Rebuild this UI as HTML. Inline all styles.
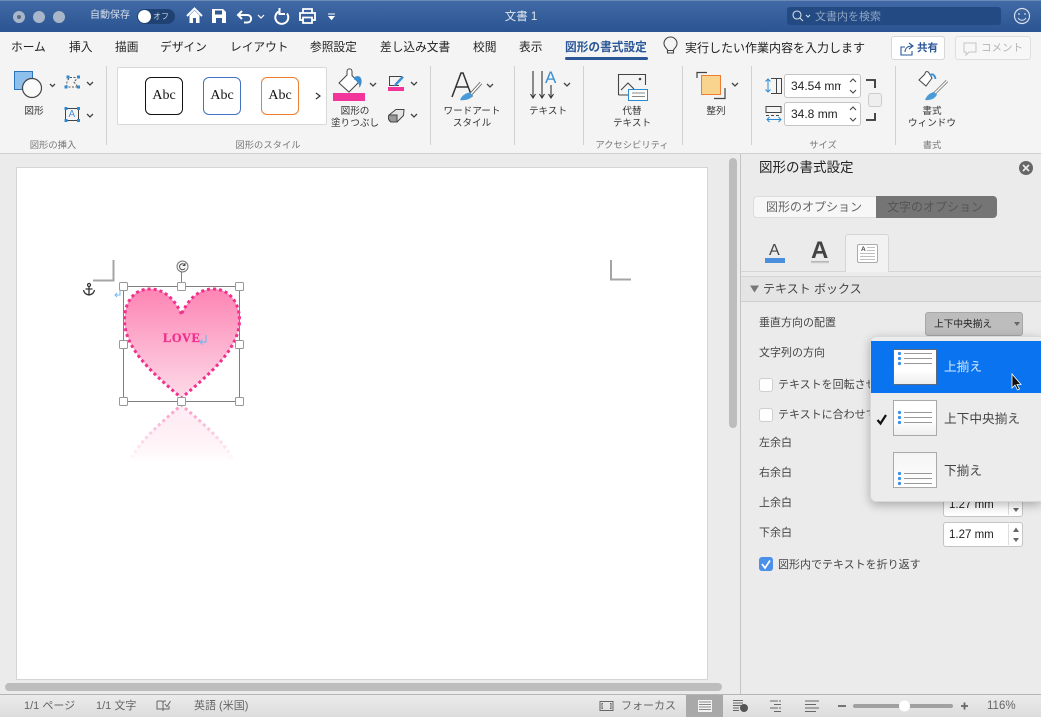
<!DOCTYPE html>
<html lang="ja"><head><meta charset="utf-8"><title>文書 1</title>
<style>
html,body{margin:0;padding:0}
body{width:1041px;height:717px;position:relative;overflow:hidden;background:#ebebeb;font-family:"Liberation Sans","Noto Sans CJK JP",sans-serif;color:#333}
.t{position:absolute;white-space:nowrap;line-height:14px}
.c{transform:translateX(-50%);text-align:center}
.b{position:absolute;box-sizing:border-box}
svg{position:absolute;left:0;top:0;overflow:visible}
.tab{font-size:11.7px;top:41px;color:#222}
.rb{font-size:9.6px;color:#333;line-height:11px}
.gl{font-size:9.3px;color:#777;top:138px}
.p{font-size:11px;color:#444}
.num{background:#fff;border:1px solid #c4c4c4;border-radius:3px}
.cb{width:14px;height:14px;background:#fff;border:1px solid #cfcfcf;border-radius:3px}
.st{font-size:11px;color:#666;top:699px}
.abc{position:absolute;top:77px;width:38px;height:38px;box-sizing:border-box;border-radius:6px;background:#fff;font:14px/36px "Liberation Serif",serif;color:#111;text-align:center}
</style></head><body>

<!-- Title bar -->
<div class="b" style="left:0;top:0;width:1041px;height:32px;background:linear-gradient(#4069a5,#2b5592);border-top:1px solid #6b8bb9"></div>
<div class="b" style="left:13px;top:11px;width:12px;height:12px;border-radius:50%;background:#a9b6c9"></div>
<div class="b" style="left:17px;top:15px;width:4px;height:4px;border-radius:50%;background:#5b6a80"></div>
<div class="b" style="left:33px;top:11px;width:12px;height:12px;border-radius:50%;background:#a9b6c9"></div>
<div class="b" style="left:53px;top:11px;width:12px;height:12px;border-radius:50%;background:#a9b6c9"></div>
<div class="t" style="left:90px;top:9px;font-size:10px;color:#d5deea">自動保存</div>
<div class="b" style="left:137px;top:9px;width:38px;height:15px;border-radius:8px;background:#1f4273"></div>
<div class="b" style="left:138px;top:10px;width:13px;height:13px;border-radius:50%;background:#fff"></div>
<div class="t" style="left:153px;top:10px;font-size:8px;line-height:13px;color:#c6d2e2">オフ</div>
<svg width="1041" height="32" fill="none" stroke="#fff">
<path d="M187 16 194.500 8.500 202 16" stroke-width="2"/><path d="M189.500 15.500 194.500 10.500 199.500 15.500V23H196V18H193V23H189.500Z" fill="#fff" stroke="none"/>
<path d="M212 9H223L226 12V23H212Z" fill="#fff" stroke="none"/><rect x="215" y="10.500" width="7" height="4" fill="#2f5a97" stroke="none"/><rect x="216" y="18" width="6" height="5" fill="#2f5a97" stroke="none"/>
<path d="M238 15H247C252.500 15 252.500 22.500 247 22.500H244M242 11 238 15 242 19" stroke-width="2"/>
<path d="M258 15l3 3 3-3" stroke-width="1.200"/>
<path d="M279 11.500A6.500 6.500 0 1 0 287 13.500M279.500 8V14H285" stroke-width="2"/>
<path d="M303 13V9H312V13M303 20H300V13H315V20H312M303 17.500H312V23H303Z" stroke-width="1.800"/>
<path d="M328 14h7M329 16.500h5l-2.500 3z" fill="#fff" stroke="#fff" stroke-width="1"/>
<circle cx="1022" cy="16" r="7.500" stroke="#d5deea" stroke-width="1.200"/><circle cx="1019" cy="14" r=".9" fill="#d5deea" stroke="none"/><circle cx="1025" cy="14" r=".9" fill="#d5deea" stroke="none"/><path d="M1018 18c2 3 6 3 8 0" stroke="#d5deea"/>
</svg>
<div class="t" style="left:521px;top:10px;font-size:11.500px;color:#dfe6ef;transform:translateX(-50%)">文書 1</div>
<div class="b" style="left:787px;top:7px;width:214px;height:18px;background:#234a83;border-radius:3px"></div>
<svg width="1041" height="32" fill="none" stroke="#d5deea"><circle cx="797" cy="15" r="4" stroke-width="1.100"/><path d="M800 18l3 3M806 15l2 2 2-2" stroke-width="1.100"/></svg>
<div class="t" style="left:815px;top:10px;font-size:11px;color:#8ea4c3">文書内を検索</div>

<!-- Ribbon -->
<div class="b" style="left:0;top:32px;width:1041px;height:122px;background:#f4f4f4;border-bottom:1px solid #cfcfcf"></div>
<div class="t tab" style="left:11px">ホーム</div>
<div class="t tab" style="left:69px">挿入</div>
<div class="t tab" style="left:115px">描画</div>
<div class="t tab" style="left:160px">デザイン</div>
<div class="t tab" style="left:230px">レイアウト</div>
<div class="t tab" style="left:310px">参照設定</div>
<div class="t tab" style="left:380px">差し込み文書</div>
<div class="t tab" style="left:473px">校閲</div>
<div class="t tab" style="left:519px">表示</div>
<div class="t tab" style="left:565px;color:#2b5797;font-weight:bold">図形の書式設定</div>
<div class="b" style="left:565px;top:57px;width:83px;height:3px;border-radius:2px;background:#2b5797"></div>
<svg width="1041" height="160" fill="none" stroke="#444"><path d="M667.500 50C666 47.500 664 46.500 664 43.500A6.500 6.500 0 0 1 677 43.500C677 46.500 675 47.500 673.500 50V53H667.500ZM668 50.500H673" stroke-width="1.100"/></svg>
<div class="t" style="left:685px;top:41px;font-size:12px;color:#222">実行したい作業内容を入力します</div>
<div class="b" style="left:891px;top:36px;width:54px;height:24px;background:#fff;border:1px solid #d8d8d8;border-radius:3px"></div>
<div class="t" style="left:917px;top:41px;font-size:10.500px;font-weight:bold;color:#2b5797">共有</div>
<div class="b" style="left:955px;top:36px;width:76px;height:24px;background:#f7f7f7;border:1px solid #dedede;border-radius:3px"></div>
<div class="t" style="left:981px;top:41px;font-size:10.500px;color:#b5b5b5">コメント</div>
<svg width="1041" height="160" fill="none">
<path d="M905 47H901V55H912V51M905 52C905 48 908 46 912 46M909 43 913 46 909 49" stroke="#2b5797" stroke-width="1.100"/>
<path d="M964 43H976V52H969L966 55V52H964Z" stroke="#c4c4c4"/>
<path d="M106.500 66V145M430.500 66V145M514.500 66V145M583.500 66V145M682.500 66V145M751.500 66V145M895.500 66V145" stroke="#d2d2d2"/>
</svg>

<!-- Shape insert group -->
<svg width="1041" height="160" fill="none">
<rect x="14.500" y="71.500" width="18" height="18" fill="#8dc0ec" stroke="#2a75bb"/>
<circle cx="32" cy="88" r="9.500" fill="#fafafa" stroke="#444" stroke-width="1.200"/>
<path d="M50 84l2.500 2.500 2.500-2.500M87 82l3 3 3-3M87 114l3 3 3-3" stroke="#444" stroke-width="1.300"/>
<path d="M67 87C66 82 68 79 70 77.500H78L74 82 78 87H67" stroke="#555" stroke-dasharray="2 1.500"/>
<rect x="66.500" y="75.500" width="3" height="3" fill="#2a8ad4"/><rect x="77" y="75.500" width="3" height="3" fill="#2a8ad4"/><rect x="64.500" y="85.500" width="3" height="3" fill="#2a8ad4"/><rect x="77" y="85.500" width="3" height="3" fill="#2a8ad4"/>
<rect x="65.500" y="108.500" width="13" height="12" stroke="#444"/>
<rect x="64.500" y="107" width="3" height="3" fill="#2a8ad4"/><rect x="77" y="107" width="3" height="3" fill="#2a8ad4"/><rect x="64.500" y="119" width="3" height="3" fill="#2a8ad4"/><rect x="77" y="119" width="3" height="3" fill="#2a8ad4"/>
</svg>
<div class="t" style="left:68.500px;top:108px;font-size:10px;color:#4a90d9;line-height:14px">A</div>
<div class="t rb c" style="left:34px;top:106px">図形</div>
<div class="t gl c" style="left:53px">図形の挿入</div>

<!-- Gallery -->
<div class="b" style="left:117px;top:67px;width:210px;height:58px;background:#fff;border:1px solid #d8d8d8;border-radius:2px"></div>
<div class="abc" style="left:145px;border:1px solid #111">Abc</div>
<div class="abc" style="left:203px;border:1px solid #4472c4">Abc</div>
<div class="abc" style="left:261px;border:1px solid #ed7d31">Abc</div>
<svg width="1041" height="160" fill="none">
<path d="M316 93l4 3-4 3" stroke="#333" stroke-width="1.200"/>
<!-- fill bucket -->
<path d="M339 83 347 75V71.500C347 68 352 68 352 71.500V75.500L358.500 82.500 349 92Z" fill="#fff" stroke="#444"/>
<path d="M354 77.500C357 75 361 76 361.500 80C362 83 361 85 359.500 88C359 84 358.500 81 354 79.500Z" fill="#3a8fd3"/>
<rect x="333" y="93" width="32" height="8" fill="#f2359a"/>
<path d="M370 83l3 3 3-3M411 82l3 3 3-3M411 114l3 3 3-3M487 84l3 3 3-3" stroke="#444" stroke-width="1.300"/>
<path d="M399 85.500H389.500V76.500H402" stroke="#444"/>
<path d="M395 83.500 402 76 404 77.500 397 85 393.500 86.500Z" fill="#3a8fd3"/>
<rect x="388" y="87" width="16" height="4" fill="#f2359a"/>
<path d="M389 115 396 109.500H404L403.500 115.500 397 122H391C388 120 388 117 389 115Z" fill="#e4e4e4" stroke="#444"/><path d="M389 115H397V122H391C388 120 388 117 389 115Z" fill="#999" stroke="#444"/>
<!-- wordart -->
<path d="M452 97 461 73H463L472 97M456 87H468" stroke="#333" stroke-width="1.500"/>
<path d="M471 94 481 83" stroke="#666" stroke-width="3.200"/><path d="M471 94 481 83" stroke="#fff" stroke-width="1.600"/>
<path d="M460 100C462 95 466 93 470 92.500L473 95.500C471 99 465 101 460 100Z" fill="#4a9ad8"/>
</svg>
<div class="t rb c" style="left:355px;top:106px;line-height:11.500px">図形の<br>塗りつぶし</div>
<div class="t rb c" style="left:472px;top:106px;line-height:11.500px">ワードアート<br>スタイル</div>
<div class="t gl c" style="left:268px">図形のスタイル</div>

<!-- Text / alt / arrange / size -->
<svg width="1041" height="160" fill="none">
<path d="M533 71V98M530.500 94l2.500 4 2.500-4M542 71V98M539.500 94l2.500 4 2.500-4M551 85V98M548.500 94l2.500 4 2.500-4" stroke="#333" stroke-width="1.100"/>
<path d="M564 83l3 3 3-3M732 83l3 3 3-3" stroke="#444" stroke-width="1.300"/>
<path d="M618.500 95V74.500H645.500V85M618.500 95H628M621 90 628 83 634 89" stroke="#444" stroke-width="1.100"/>
<circle cx="640" cy="79" r="1.300" fill="#444"/>
<rect x="628.500" y="89.500" width="19" height="11" fill="#fff" stroke="#2a8ad4"/><path d="M632 93H645M632 96.500H645" stroke="#888"/>
<path d="M697 78V72.500H707M725 88V98.500H714" stroke="#444" stroke-width="1.200"/>
<rect x="701.500" y="75.500" width="19" height="19" fill="#f9d48f" stroke="#ed7d31"/>
<!-- size icons -->
<path d="M768 79V92M765.500 81.500 768 79l2.500 2.500M765.500 89.500 768 92l2.500-2.500" stroke="#2a8ad4"/>
<path d="M771 78.500H776M771 93.500H776" stroke="#444"/><rect x="776.500" y="78.500" width="5" height="15" stroke="#444"/>
<path d="M766 106.500H781V112.500H766Z" stroke="#444"/><path d="M766 115.500H781" stroke="#444" stroke-dasharray="3 2"/>
<path d="M767 119.500H781M769.500 117 767 119.500l2.500 2.500M778.500 117 781 119.500l-2.500 2.500" stroke="#2a8ad4"/>
<path d="M866 80H875V88M866 120H875V113" stroke="#333" stroke-width="1.800"/>
<!-- format window -->
<path d="M919 80 925 74C925 71 928 71 929 73L932 78 926 86Z" fill="#fff" stroke="#444"/>
<path d="M930 75.500C932 73 935 75 935.500 79" stroke="#3a8fd3" stroke-width="1.800"/>
<path d="M935 93 947 81" stroke="#666" stroke-width="3"/><path d="M935 93 947 81" stroke="#fff" stroke-width="1.500"/>
<path d="M925 100C927 95 930 93 934 92L937 94.500C935 99 930 100.500 925 100Z" fill="#4a9ad8"/>
</svg>
<div class="t" style="left:545px;top:68px;font-size:17px;line-height:20px;color:#3a8fd3">A</div>
<div class="t rb c" style="left:548px;top:106px">テキスト</div>
<div class="t rb c" style="left:632px;top:106px;line-height:11.500px">代替<br>テキスト</div>
<div class="t gl c" style="left:632px">アクセシビリティ</div>
<div class="t rb c" style="left:716px;top:106px">整列</div>
<div class="b num" style="left:784px;top:74px;width:77px;height:24px"></div>
<div class="b num" style="left:784px;top:102px;width:77px;height:24px"></div>
<div class="t" style="left:791px;top:79px;font-size:12px;color:#222;width:50px;overflow:hidden">34.54 mm</div>
<div class="t" style="left:791px;top:107px;font-size:12px;color:#222">34.8 mm</div>
<svg width="1041" height="160" fill="none"><path d="M850 82l3-3 3 3M850 90l3 3 3-3M850 110l3-3 3 3M850 118l3 3 3-3" stroke="#444" stroke-width="1.100"/></svg>
<div class="b" style="left:868px;top:93px;width:14px;height:14px;background:#eee;border:1px solid #ccc;border-radius:3px"></div>
<div class="t gl c" style="left:823px">サイズ</div>
<div class="t rb c" style="left:932px;top:106px;line-height:11.500px">書式<br>ウィンドウ</div>
<div class="t gl c" style="left:932px">書式</div>

<!-- Document area -->
<div class="b" style="left:16px;top:167px;width:692px;height:513px;background:#fff;border:1px solid #d5d5d5"></div>
<div class="b" style="left:729px;top:158px;width:8px;height:270px;border-radius:4px;background:#bdbdbd"></div>
<div class="b" style="left:5px;top:683px;width:717px;height:8px;border-radius:4px;background:#bdbdbd"></div>
<div class="b" style="left:740px;top:154px;width:1px;height:540px;background:#c4c4c4"></div>

<svg width="1041" height="717" fill="none">
<defs>
<linearGradient id="h" x1="0" y1="0" x2="0" y2="1"><stop offset="0" stop-color="#fd84b4"/><stop offset="1" stop-color="#fddbe8"/></linearGradient>
<linearGradient id="fd" gradientUnits="userSpaceOnUse" x1="0" y1="404" x2="0" y2="463"><stop offset="0" stop-color="#fff" stop-opacity=".5"/><stop offset="1" stop-color="#fff" stop-opacity="0"/></linearGradient>
<mask id="m" maskUnits="userSpaceOnUse" x="100" y="400" width="170" height="70"><rect x="100" y="400" width="170" height="70" fill="url(#fd)"/></mask>
</defs>
<path d="M93 280.500H113.500V260" stroke="#a5a5a5" stroke-width="2"/>
<path d="M631 279.500H611V260" stroke="#a5a5a5" stroke-width="2"/>
<!-- anchor -->
<circle cx="89" cy="285" r="1.500" stroke="#333" stroke-width="1.200"/><path d="M89 286.500V294.500M85.500 289H92.500M83.500 290C84 293 86 294.500 89 295C92 294.500 94 293 94.500 290" stroke="#333" stroke-width="1.300"/>
<path d="M120 291V295H115M117 293 115 295 117 297" stroke="#7ab8ee"/>
<!-- reflection -->
<g mask="url(#m)"><g transform="translate(0,803) scale(1,-1)">
<path d="M181.500 314C175 300 165 289 150 289C133 289 124.500 303 124.500 320C124.500 350 155 375 181.500 398C208 375 239.500 350 239.500 320C239.500 303 230 289 213 289C198 289 188 300 181.500 314Z" fill="url(#h)" stroke="#f0308c" stroke-width="3" stroke-dasharray="3 3"/>
</g></g>
<!-- heart -->
<path d="M181.500 314C175 300 165 289 150 289C133 289 124.500 303 124.500 320C124.500 350 155 375 181.500 398C208 375 239.500 350 239.500 320C239.500 303 230 289 213 289C198 289 188 300 181.500 314Z" fill="url(#h)" stroke="#f0308c" stroke-width="3" stroke-dasharray="3 3"/>
<!-- selection -->
<rect x="123.500" y="286.500" width="116" height="115" stroke="#7f7f7f"/>
<path d="M181.500 272V286" stroke="#7f7f7f"/>
<circle cx="182.500" cy="266.500" r="5.500" fill="#f5f5f5" stroke="#777"/>
<path d="M185 265A3 3 0 1 0 185 268.500M185 263V265.500H182.800" stroke="#444" stroke-width=".9"/>
<g fill="#fff" stroke="#999">
<rect x="119.500" y="282.500" width="8" height="8" rx="1"/><rect x="177.500" y="282.500" width="8" height="8" rx="1"/><rect x="235.500" y="282.500" width="8" height="8" rx="1"/>
<rect x="119.500" y="340.500" width="8" height="8" rx="1"/><rect x="235.500" y="340.500" width="8" height="8" rx="1"/>
<rect x="119.500" y="397.500" width="8" height="8" rx="1"/><rect x="177.500" y="397.500" width="8" height="8" rx="1"/><rect x="235.500" y="397.500" width="8" height="8" rx="1"/>
</g>
<path d="M206 335V342H200M202.500 339.500 200 342l2.500 2.500" stroke="#7ab8ee" stroke-width="1.200"/>
</svg>
<div class="t" style="left:163px;top:331px;font:bold 12.500px/14px 'Liberation Serif',serif;color:#f0308c;letter-spacing:.5px;-webkit-text-stroke:.3px #f0308c">LOVE</div>

<!-- Panel -->
<div class="t" style="left:759px;top:161px;font-size:13.500px;color:#222">図形の書式設定</div>
<div class="b" style="left:1019px;top:161px;width:14px;height:14px;border-radius:50%;background:#666"></div>
<svg width="1041" height="717" fill="none"><path d="M1023 165 1029 171M1029 165 1023 171" stroke="#eee" stroke-width="1.600"/></svg>
<div class="b" style="left:753px;top:196px;width:123px;height:22px;background:#f7f7f7;border:1px solid #ddd;border-right:0;border-radius:4px 0 0 4px"></div>
<div class="b" style="left:876px;top:196px;width:121px;height:22px;background:#757575;border-radius:0 4px 4px 0"></div>
<div class="t" style="left:766px;top:200px;font-size:12px;color:#666">図形のオプション</div>
<div class="t" style="left:887px;top:200px;font-size:12px;color:#555">文字のオプション</div>
<div class="b" style="left:741px;top:271px;width:300px;height:1px;background:#d5d5d5"></div>
<div class="b" style="left:845px;top:234px;width:44px;height:38px;background:#f2f2f2;border:1px solid #d5d5d5;border-bottom:0;border-radius:3px 3px 0 0"></div>
<div class="t" style="left:769px;top:241px;font-size:16px;line-height:20px;color:#444">A</div>
<div class="b" style="left:765px;top:258px;width:20px;height:5px;background:#4a8fdc"></div>
<div class="t" style="left:811px;top:237px;font-size:24px;line-height:28px;font-weight:bold;color:#444">A</div>
<div class="b" style="left:811px;top:261px;width:18px;height:3px;background:linear-gradient(#aaa,#eee)"></div>
<div class="b" style="left:857px;top:244px;width:21px;height:19px;background:#fff;border:1px solid #aaa;border-radius:2px"></div>
<div class="t" style="left:861px;top:245px;font-size:6.500px;line-height:9px;font-weight:bold;color:#444">A</div>
<svg width="1041" height="717" fill="none"><path d="M867 247.500H875M867 250.500H875M860 253.500H875M860 256.500H875M860 259.500H875" stroke="#aaa" stroke-width=".8"/></svg>
<div class="b" style="left:741px;top:276px;width:300px;height:26px;background:#e4e4e4;border-top:1px solid #d5d5d5;border-bottom:1px solid #d0d0d0"></div>
<svg width="1041" height="717" fill="none"><path d="M750 285.500H759L754.500 292.500Z" fill="#777"/></svg>
<div class="t" style="left:763px;top:282px;font-size:12px;color:#444">テキスト ボックス</div>
<div class="t p" style="left:759px;top:316px">垂直方向の配置</div>
<div class="b" style="left:925px;top:312px;width:98px;height:24px;background:#bdbdbd;border:1px solid #a8a8a8;border-radius:3px"></div>
<div class="t" style="left:934px;top:318px;font-size:9.700px;color:#222">上下中央揃え</div>
<svg width="1041" height="717" fill="none"><path d="M1014 322H1020L1017 326Z" fill="#666"/></svg>
<div class="t p" style="left:759px;top:346px">文字列の方向</div>
<div class="b cb" style="left:759px;top:378px"></div>
<div class="t p" style="left:778px;top:378px">テキストを回転させない</div>
<div class="b cb" style="left:759px;top:408px"></div>
<div class="t p" style="left:778px;top:408px">テキストに合わせて図形のサイズ</div>
<div class="t p" style="left:759px;top:436px">左余白</div>
<div class="t p" style="left:759px;top:466px">右余白</div>
<div class="t p" style="left:759px;top:496px">上余白</div>
<div class="t p" style="left:759px;top:526px">下余白</div>
<div class="b num" style="left:943px;top:493px;width:80px;height:24px"></div>
<div class="b num" style="left:943px;top:522px;width:80px;height:25px"></div>
<div class="t" style="left:949px;top:498px;font-size:11.500px;color:#222">1.27 mm</div>
<div class="t" style="left:949px;top:528px;font-size:11.500px;color:#222">1.27 mm</div>
<svg width="1041" height="717" fill="none"><path d="M1008.500 495V515M1008.500 524V545" stroke="#ddd"/><path d="M1013 508H1019L1016 512ZM1013 532H1019L1016 527.500ZM1013 538H1019L1016 542Z" fill="#666"/></svg>
<div class="b" style="left:759px;top:557px;width:14px;height:14px;background:#4a90e8;border-radius:3px"></div>
<svg width="1041" height="717" fill="none"><path d="M762 564 765 568 770 560.500" stroke="#fff" stroke-width="1.700"/></svg>
<div class="t p" style="left:778px;top:558px">図形内でテキストを折り返す</div>

<!-- Dropdown -->
<div class="b" style="left:870px;top:336px;width:171px;height:166px;background:#ececec;border:1px solid #d8d8d8;border-right:0;border-radius:6px 0 0 6px;box-shadow:0 3px 10px rgba(0,0,0,.28)"></div>
<div class="b" style="left:871px;top:341px;width:170px;height:52px;background:#0a74f0"></div>
<div class="b" style="left:893px;top:349px;width:44px;height:36px;background:linear-gradient(#fff 60%,#eee);border:1px solid #5a6b80"></div>
<div class="b" style="left:893px;top:400px;width:44px;height:36px;background:linear-gradient(#fff 60%,#eee);border:1px solid #aaa"></div>
<div class="b" style="left:893px;top:452px;width:44px;height:36px;background:linear-gradient(#f4f4f4,#fff);border:1px solid #aaa"></div>
<svg width="1041" height="717" fill="none">
<g stroke="#999"><path d="M904 353.500H932M904 358.500H932M904 363.500H932M904 412.500H932M904 417.500H932M904 422.500H932M904 473.500H932M904 478.500H932M904 483.500H932"/></g>
<g fill="#3a8fe8"><circle cx="899.500" cy="353.500" r="1.600"/><circle cx="899.500" cy="358.500" r="1.600"/><circle cx="899.500" cy="363.500" r="1.600"/><circle cx="899.500" cy="412.500" r="1.600"/><circle cx="899.500" cy="417.500" r="1.600"/><circle cx="899.500" cy="422.500" r="1.600"/><circle cx="899.500" cy="473.500" r="1.600"/><circle cx="899.500" cy="478.500" r="1.600"/><circle cx="899.500" cy="483.500" r="1.600"/></g>
<path d="M877.500 420 880.500 423.500 886 415" stroke="#111" stroke-width="2.200"/>
<path d="M1012 374V388L1015 385 1017.500 390 1019.500 389 1017 384.500H1021Z" fill="#111" stroke="#fff" stroke-width=".8"/>
</svg>
<div class="t" style="left:944px;top:360px;font-size:12.700px;color:#d6e7fd">上揃え</div>
<div class="t" style="left:944px;top:412px;font-size:12.700px;color:#444">上下中央揃え</div>
<div class="t" style="left:944px;top:464px;font-size:12.700px;color:#444">下揃え</div>

<!-- Status bar -->
<div class="b" style="left:0;top:694px;width:1041px;height:23px;background:linear-gradient(#ebebeb,#dcdcdc);border-top:1px solid #b5b5b5"></div>
<div class="t st" style="left:24px">1/1 ページ</div>
<div class="t st" style="left:96px">1/1 文字</div>
<div class="t st" style="left:194px">英語 (米国)</div>
<div class="t st" style="left:621px">フォーカス</div>
<div class="b" style="left:686px;top:695px;width:37px;height:22px;background:#a9a9a9"></div>
<div class="t st" style="left:987px;font-size:11.500px">116%</div>
<svg width="1041" height="717" fill="none">
<path d="M157 701H162L163 702.500V711M163 702.500 164 701H166M157 701V709H169V706" stroke="#666"/><path d="M165 704 167 706.500 170.500 701" stroke="#666"/>
<rect x="600" y="701.500" width="13" height="9" stroke="#666"/><path d="M603 703.500H602V708.500H603M610 703.500H611V708.500H610" stroke="#666"/>
<rect x="698" y="700" width="14" height="12" fill="#f3f3f3"/><path d="M699 702H711M699 704.500H711M699 707H711M699 709.500H711" stroke="#888"/>
<path d="M733 700.500H743M733 703H743M733 705.500H741M733 708H739M733 710.500H739" stroke="#666"/><circle cx="744" cy="708" r="4" fill="#555"/>
<path d="M770 701H781M774 704.500H781M770 708H781M774 711.500H781" stroke="#666" stroke-dasharray="8 1"/>
<path d="M805 701H819M805 704.500H816M805 708H819M805 711.500H816" stroke="#666"/>
<path d="M838 706H846M961 706H968M964.500 702.500V709.500" stroke="#666" stroke-width="1.800"/>
<path d="M855 706H951" stroke="#a0a0a0" stroke-width="4" stroke-linecap="round"/>
<circle cx="904.500" cy="706" r="5.500" fill="#fff"/>
</svg>
</body></html>
